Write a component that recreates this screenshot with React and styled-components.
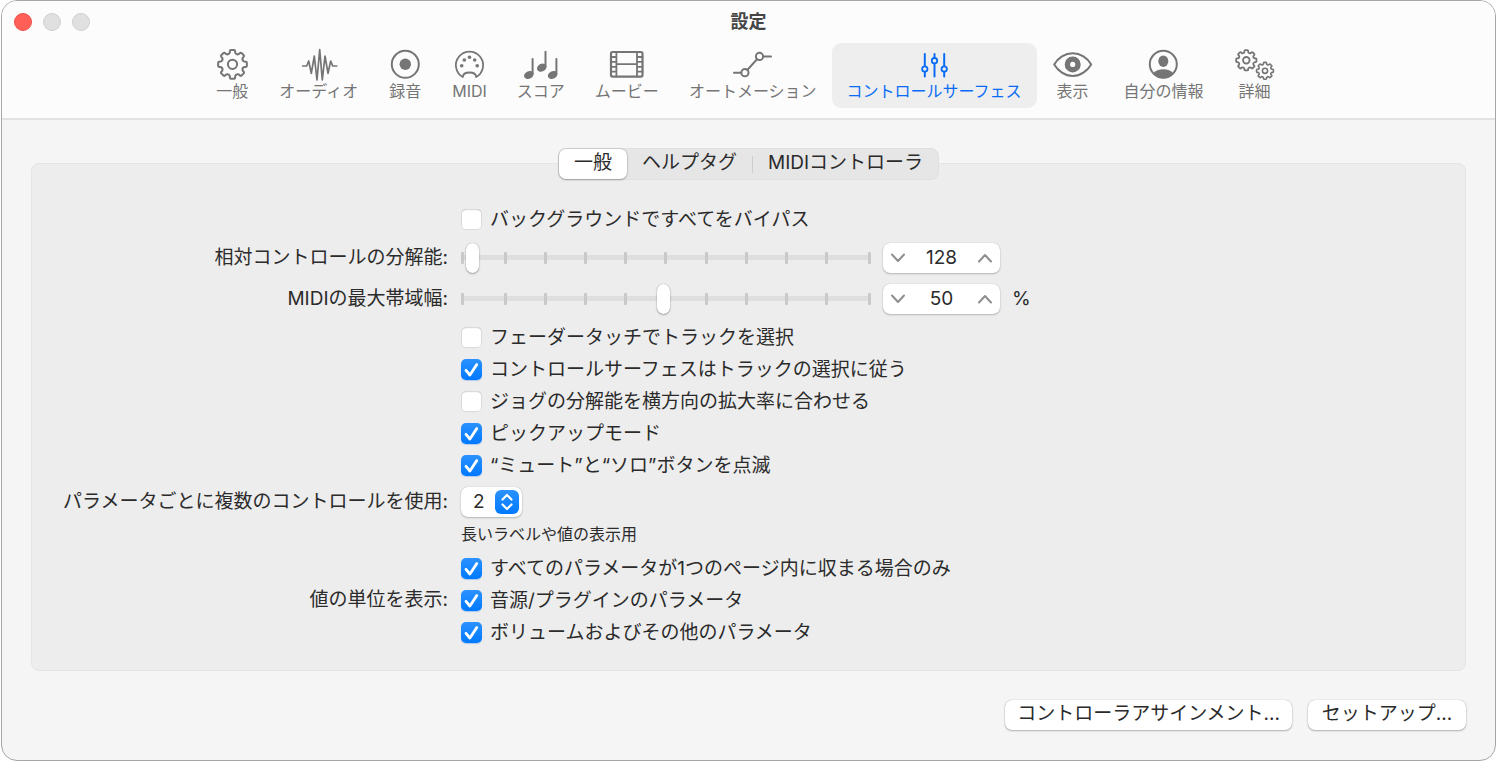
import React, { useState } from "react";
import styled, { createGlobalStyle } from "styled-components";

const GlobalStyle = createGlobalStyle`
  *, *::before, *::after { box-sizing: border-box; }
  body {
    margin: 0;
    background: #fff;
    color: #2b2b2b;
    font: 19px/24px Inter, "Noto Sans CJK JP", sans-serif;
  }
  button, input, select { font: inherit; color: inherit; margin: 0; }
`;

const Window = styled.main`
  display: flex;
  flex-direction: column;
  min-height: 100vh;
  margin: 0 2px 0 1px;
  border: 1px solid #a6a6a6;
  border-radius: 16px;
  background: #f5f5f5;
  overflow: hidden;
`;

const Header = styled.header`
  background: #fcfcfc;
  border-bottom: 2px solid #e2e2e2;
  padding-bottom: 10px;
`;

const TitleBar = styled.div`
  display: grid;
  grid-template-columns: 1fr auto 1fr;
  align-items: center;
  height: 42px;
  padding: 0 12px;
`;

const TrafficLights = styled.div`
  display: flex;
  gap: 11px;
`;

const Light = styled.button`
  width: 18px;
  height: 18px;
  padding: 0;
  border-radius: 50%;
  border: 1px solid ${(p) => (p.$active ? "#ee5048" : "#cfcfcf")};
  background: ${(p) => (p.$active ? "#ff5f57" : "#e0e0e0")};
`;

const Title = styled.h1`
  margin: 0;
  font-size: 18px;
  line-height: 24px;
  font-weight: 600;
  color: #454545;
`;

const Toolbar = styled.nav`
  display: flex;
  justify-content: center;
  padding-right: 6px;
`;

const ToolItem = styled.button`
  display: flex;
  flex-direction: column;
  align-items: center;
  padding: 5px 15px 7px;
  border: 0;
  border-radius: 9px;
  background: ${(p) => (p.$selected ? "#eeeeee" : "transparent")};
  color: ${(p) => (p.$selected ? "#0a6cf5" : "#757575")};
  font-size: 16px;
  line-height: 19px;
  white-space: nowrap;
`;

const ToolIcon = styled.svg`
  display: block;
  width: 40px;
  height: 34px;
  margin: 0 ${(p) => (p.$wide ? 1 : -3)}px;
  fill: none;
  stroke: currentColor;
  stroke-width: 2;
  stroke-linecap: round;
  stroke-linejoin: round;
  .solid { fill: currentColor; stroke: none; }
`;

const Content = styled.section`
  display: flex;
  flex-direction: column;
  flex: 1;
  padding: 28px 29px 29px;
`;

const Tabs = styled.div`
  display: flex;
  align-self: center;
  height: 32px;
  margin-bottom: -17px;
  z-index: 1;
  border: 1px solid #dfdfdf;
  border-radius: 8px;
  background: #e6e6e6;
`;

const Tab = styled.button`
  height: 30px;
  padding: 0 15px 2px;
  border: 0;
  border-radius: 7px;
  background: ${(p) => (p.$selected ? "#fff" : "transparent")};
  box-shadow: ${(p) => (p.$selected ? "0 0 1px 1px rgba(0,0,0,.08), 0 1px 2px rgba(0,0,0,.25)" : "none")};
  line-height: 26px;
`;

const TabDivider = styled.span`
  width: 1px;
  height: 17px;
  align-self: center;
  background: #cdcdcd;
`;

const Panel = styled.div`
  padding: 39px 20px 22px;
  border: 1px solid #e4e4e4;
  border-radius: 8px;
  background: #ededed;
`;

const Row = styled.div`
  display: grid;
  grid-template-columns: 396px 1fr;
  column-gap: 13px;
  align-items: center;
  height: ${(p) => (p.$tall ? 41 : 32)}px;
  margin-bottom: ${(p) => (p.$spaced ? 2 : 0)}px;
`;

const RowLabel = styled.label`
  grid-column: 1;
  text-align: right;
  white-space: nowrap;
`;

const RowControl = styled.div`
  grid-column: 2;
  display: flex;
  align-items: center;
  gap: 12px;
`;

const CheckLabel = styled.label`
  display: flex;
  align-items: center;
  gap: 8px;
  white-space: nowrap;
`;

const CheckText = styled.span`
  padding-top: 2px;
`;

const Stack = styled.span`
  display: inline-grid;
  align-items: center;
  > * { grid-area: 1 / 1; }
`;

const CheckBox = styled.input`
  appearance: none;
  width: 21px;
  height: 21px;
  border-radius: 5px;
  background: #fff;
  box-shadow: inset 0 0 0 1px #d9d9d9, inset 0 2px 1px -1px #c4c4c4;
  &:checked {
    background: linear-gradient(#2b92ff, #0079ff);
    box-shadow: 0 1px 1px rgba(0, 90, 220, 0.25);
  }
  & + svg { visibility: hidden; }
  &:checked + svg { visibility: visible; }
`;

const CheckMark = styled.svg`
  width: 21px;
  height: 21px;
  fill: none;
  stroke: #fff;
  stroke-width: 2.8;
  stroke-linecap: round;
  stroke-linejoin: round;
  pointer-events: none;
`;

const SliderBox = styled(Stack)`
  width: 410px;
  height: 30px;
`;

const Ticks = styled.span`
  display: flex;
  justify-content: space-between;
  height: 12px;
`;

const Tick = styled.span`
  width: 3px;
  border-radius: 1px;
  background: #c9c9c9;
  &:first-child { margin-right: 3px; }
  &:last-child { margin-left: 3px; }
`;

const Track = styled.span`
  height: 5px;
  border-radius: 2px;
  background: #dedede;
`;

const Range = styled.input`
  appearance: none;
  width: 100%;
  height: 30px;
  background: transparent;
  &::-webkit-slider-thumb {
    appearance: none;
    width: 13px;
    height: 30px;
    border-radius: 7px;
    background: #fff;
    box-shadow: 0 0 1px rgba(0, 0, 0, 0.35), 0 1px 2px rgba(0, 0, 0, 0.3);
  }
`;

const Stepper = styled.div`
  display: flex;
  width: 117px;
  height: 30px;
  border-radius: 7px;
  background: #fff;
  box-shadow: 0 0 1px rgba(0, 0, 0, 0.25), 0 1px 2px rgba(0, 0, 0, 0.22);
`;

const StepButton = styled.button`
  display: grid;
  place-items: center;
  flex: 0 0 30px;
  padding: 0;
  border: 0;
  background: none;
  color: #8e8e8e;
`;

const StepValue = styled.input`
  flex: 1;
  min-width: 0;
  padding: 0;
  border: 0;
  background: none;
  text-align: center;
`;

const Chevron = styled.svg`
  width: 16px;
  height: 10px;
  fill: none;
  stroke: currentColor;
  stroke-width: 2;
  stroke-linecap: round;
  stroke-linejoin: round;
`;

const PopUp = styled.select`
  appearance: none;
  width: 61px;
  height: 30px;
  padding: 0 0 0 12px;
  border: 0;
  border-radius: 7px;
  background: #fff;
  box-shadow: 0 0 1px rgba(0, 0, 0, 0.25), 0 1px 2px rgba(0, 0, 0, 0.22);
`;

const PopUpBadge = styled.svg`
  justify-self: end;
  width: 24px;
  height: 24px;
  margin-right: 3px;
  border-radius: 6px;
  background: linear-gradient(#2b92ff, #0079ff);
  fill: none;
  stroke: #fff;
  stroke-width: 2.2;
  stroke-linecap: round;
  stroke-linejoin: round;
  pointer-events: none;
`;

const Note = styled.p`
  margin: 0;
  height: 30px;
  padding: 0 0 6px 409px;
  font-size: 16px;
  line-height: 24px;
`;

const Footer = styled.footer`
  display: flex;
  justify-content: flex-end;
  gap: 16px;
  margin-top: 29px;
`;

const PushButton = styled.button`
  height: 30px;
  min-width: 158px;
  padding: 0 12px 2px;
  border: 0;
  border-radius: 7px;
  background: #fff;
  box-shadow: 0 0 1px rgba(0, 0, 0, 0.35), 0 1px 2px rgba(0, 0, 0, 0.25);
  line-height: 26px;
`;

/* Outline of an eight-toothed gear with outer radius r around (cx, cy). */
function gearPath(cx, cy, r) {
  const at = (deg, k) => {
    const a = (deg * Math.PI) / 180;
    return `${(cx + r * k * Math.sin(a)).toFixed(2)} ${(cy - r * k * Math.cos(a)).toFixed(2)}`;
  };
  let d = "";
  for (let i = 0; i < 8; i++) {
    const a = i * 45;
    d += `${i ? "L" : "M"}${at(a - 13, 0.84)}L${at(a - 11, 0.96)}Q${at(a - 10, 1.01)} ${at(a - 6, 1.01)}`;
    d += `L${at(a + 6, 1.01)}Q${at(a + 10, 1.01)} ${at(a + 11, 0.96)}L${at(a + 13, 0.84)}`;
    d += `Q${at(a + 22.5, 0.7)} ${at(a + 32, 0.84)}`;
  }
  return d + "Z";
}

const icons = {
  gear: (
    <>
      <path d={gearPath(20.5, 16.3, 14.3)} />
      <circle cx="20.5" cy="16.3" r="4.6" />
    </>
  ),
  wave: (
    <path
      strokeWidth="1.7"
      d="M3.7 18H7.7L9.7 13L12.3 25.3L15.3 8L18 32L20.7 1.5L23.3 32L26 8L29 25.3L31.7 13L33.7 18H37.7"
    />
  ),
  record: (
    <>
      <circle cx="20.3" cy="16.3" r="13.5" />
      <circle className="solid" cx="20.3" cy="16.3" r="5.7" />
    </>
  ),
  midi: (
    <>
      <path strokeWidth="1.8" d="M12.8 29A13.6 13.6 0 1 1 26.2 29C26 26 23.5 24.5 19.5 24.5S13 26 12.8 29Z" />
      {[[11.7, 17.7], [14.3, 12], [19.5, 9.3], [24.7, 12], [27.2, 17.7]].map(([x, y]) => (
        <circle key={x} className="solid" cx={x} cy={y} r="1.8" />
      ))}
    </>
  ),
  notes: (
    <>
      {[[7.8, 27], [20.7, 19.7], [31.6, 27]].map(([x, y]) => (
        <g key={x}>
          <ellipse className="solid" cx={x} cy={y} rx="5" ry="3.8" transform={`rotate(-28 ${x} ${y})`} />
          <path d={`M${x + 3.8} ${y - 1}V${y - 16}`} />
        </g>
      ))}
    </>
  ),
  film: (
    <>
      <rect x="4" y="4" width="31.5" height="24.6" rx="1.5" strokeWidth="2.2" />
      <path strokeWidth="1.8" d="M9.4 4V28.6M30 4V28.6M9.4 16.2H30M4 9H9.4M4 13.8H9.4M4 18.8H9.4M4 23.6H9.4M30 9H35.5M30 13.8H35.5M30 18.8H35.5M30 23.6H35.5" />
    </>
  ),
  automation: (
    <>
      <circle cx="11.9" cy="24.7" r="3.6" />
      <circle cx="26.5" cy="8.4" r="3.6" />
      <path d="M1 24.7H8.3M30.1 8.4H38M14.3 22L24.1 11.1" />
    </>
  ),
  sliders: (
    <>
      <path d="M10.8 6V18M10.8 24V28.5M20.5 6V9.7M20.5 15.7V28.5M30.2 6V18M30.2 24V28.5" />
      <circle strokeWidth="1.8" cx="10.8" cy="21" r="2.7" />
      <circle strokeWidth="1.8" cx="20.5" cy="12.7" r="2.7" />
      <circle strokeWidth="1.8" cx="30.2" cy="21" r="2.7" />
    </>
  ),
  eye: (
    <>
      <path d="M1.2 16.4C5 10 12 5.2 19.7 5.2S34.4 10 38.2 16.4C34.4 22.8 27.4 28 19.7 28S5 22.8 1.2 16.4Z" />
      <circle cx="19.7" cy="16.4" r="5.3" strokeWidth="5.4" />
    </>
  ),
  person: (
    <>
      <circle cx="19.3" cy="16.3" r="13.5" />
      <ellipse className="solid" cx="19.3" cy="13.2" rx="5" ry="5.8" />
      <path className="solid" d="M9.2 25.2C11.5 22.7 15 21.3 19.3 21.3S27.1 22.7 29.4 25.2C27 28.5 23.5 30.3 19.3 30.3S11.6 28.5 9.2 25.2Z" />
    </>
  ),
  gears: (
    <>
      <path strokeWidth="1.8" d={gearPath(11.3, 12.3, 10.1)} />
      <circle strokeWidth="1.8" cx="11.3" cy="12.3" r="3.3" />
      <path strokeWidth="1.6" d={gearPath(30, 22.8, 8.4)} />
      <circle strokeWidth="1.6" cx="30" cy="22.8" r="2.6" />
    </>
  ),
};

const wideIcons = ["eye", "gears"];

const tools = [
  ["gear", "一般"],
  ["wave", "オーディオ"],
  ["record", "録音"],
  ["midi", "MIDI"],
  ["notes", "スコア"],
  ["film", "ムービー"],
  ["automation", "オートメーション"],
  ["sliders", "コントロールサーフェス"],
  ["eye", "表示"],
  ["person", "自分の情報"],
  ["gears", "詳細"],
];

function CheckRow({ label, text, checked, spaced }) {
  return (
    <Row $spaced={spaced}>
      {label && <RowLabel as="span">{label}</RowLabel>}
      <RowControl>
        <CheckLabel>
          <Stack>
            <CheckBox type="checkbox" defaultChecked={checked} />
            <CheckMark viewBox="0 0 21 21" aria-hidden="true">
              <path d="M5 11.3L8.9 16L15.8 5.6" />
            </CheckMark>
          </Stack>
          <CheckText>{text}</CheckText>
        </CheckLabel>
      </RowControl>
    </Row>
  );
}

function SliderRow({ id, label, max, initial, unit, spaced }) {
  const [value, setValue] = useState(initial);
  const change = (v) => setValue(Math.max(1, Math.min(max, Number(v) || 1)));
  return (
    <Row $tall $spaced={spaced}>
      <RowLabel htmlFor={id}>{label}</RowLabel>
      <RowControl>
        <SliderBox>
          <Track />
          <Ticks>
            {Array.from({ length: 11 }, (_, i) => (
              <Tick key={i} />
            ))}
          </Ticks>
          <Range id={id} type="range" min="1" max={max} value={value} onChange={(e) => change(e.target.value)} />
        </SliderBox>
        <Stepper>
          <StepButton type="button" aria-label="減らす" onClick={() => change(value - 1)}>
            <Chevron viewBox="0 0 16 10"><path d="M2 1.5L8 8L14 1.5" /></Chevron>
          </StepButton>
          <StepValue aria-label={label} value={value} onChange={(e) => change(e.target.value)} />
          <StepButton type="button" aria-label="増やす" onClick={() => change(value + 1)}>
            <Chevron viewBox="0 0 16 10"><path d="M2 8.5L8 2L14 8.5" /></Chevron>
          </StepButton>
        </Stepper>
        {unit}
      </RowControl>
    </Row>
  );
}

export default function App() {
  return (
    <>
      <GlobalStyle />
      <Window>
        <Header>
          <TitleBar>
            <TrafficLights>
              <Light type="button" $active aria-label="閉じる" />
              <Light type="button" disabled aria-label="しまう" />
              <Light type="button" disabled aria-label="拡大" />
            </TrafficLights>
            <Title>設定</Title>
          </TitleBar>
          <Toolbar>
            {tools.map(([icon, label]) => (
              <ToolItem key={icon} type="button" $selected={icon === "sliders"}>
                <ToolIcon viewBox="0 0 40 34" aria-hidden="true" $wide={wideIcons.includes(icon)}>
                  {icons[icon]}
                </ToolIcon>
                {label}
              </ToolItem>
            ))}
          </Toolbar>
        </Header>
        <Content>
          <Tabs role="tablist">
            <Tab type="button" role="tab" aria-selected="true" $selected>一般</Tab>
            <Tab type="button" role="tab" aria-selected="false">ヘルプタグ</Tab>
            <TabDivider />
            <Tab type="button" role="tab" aria-selected="false">MIDIコントローラ</Tab>
          </Tabs>
          <Panel>
            <CheckRow text="バックグラウンドですべてをバイパス" spaced />
            <SliderRow id="resolution" label="相対コントロールの分解能:" max={10000} initial={128} />
            <SliderRow id="bandwidth" label="MIDIの最大帯域幅:" max={100} initial={50} unit="%" spaced />
            <CheckRow text="フェーダータッチでトラックを選択" />
            <CheckRow text="コントロールサーフェスはトラックの選択に従う" checked />
            <CheckRow text="ジョグの分解能を横方向の拡大率に合わせる" />
            <CheckRow text="ピックアップモード" checked />
            <CheckRow text="“ミュート”と“ソロ”ボタンを点滅" checked />
            <Row $tall>
              <RowLabel htmlFor="multiple">パラメータごとに複数のコントロールを使用:</RowLabel>
              <RowControl>
                <Stack>
                  <PopUp id="multiple" defaultValue="2">
                    <option>1</option>
                    <option>2</option>
                    <option>4</option>
                  </PopUp>
                  <PopUpBadge viewBox="0 0 24 24" aria-hidden="true">
                    <path d="M7.5 9.5L12 5L16.5 9.5M7.5 14.5L12 19L16.5 14.5" />
                  </PopUpBadge>
                </Stack>
              </RowControl>
            </Row>
            <Note>長いラベルや値の表示用</Note>
            <CheckRow text="すべてのパラメータが1つのページ内に収まる場合のみ" checked />
            <CheckRow label="値の単位を表示:" text="音源/プラグインのパラメータ" checked />
            <CheckRow text="ボリュームおよびその他のパラメータ" checked />
          </Panel>
          <Footer>
            <PushButton type="button">コントローラアサインメント...</PushButton>
            <PushButton type="button">セットアップ...</PushButton>
          </Footer>
        </Content>
      </Window>
    </>
  );
}
